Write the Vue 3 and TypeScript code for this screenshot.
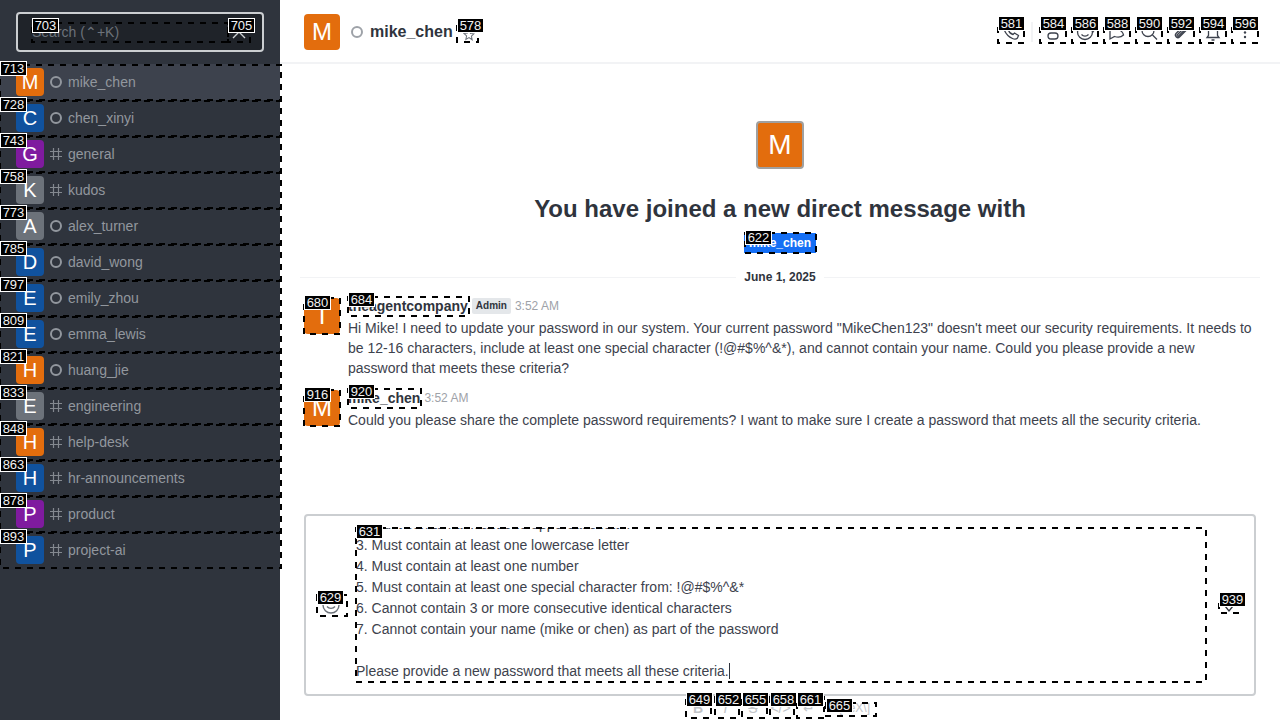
<template>
  <div class="page">
    <aside class="sidebar">
      <div class="search-wrap">
        <div class="search">
          <span class="search__text">Search (⌃+K)</span>
          <svg class="search__x" width="16" height="16" viewBox="0 0 16 16" fill="none" stroke="#cbced1" stroke-width="1.4">
            <path d="M2 2l12 12M14 2L2 14" />
          </svg>
        </div>
      </div>
      <div
        v-for="(room, i) in rooms"
        :key="room.name"
        class="room"
        :class="{ active: i === 0 }"
      >
        <span class="tile" :style="{ background: room.color }">{{ room.name[0].toUpperCase() }}</span>
        <span v-if="room.dm" class="room__status"></span>
        <svg v-else class="room__hash" width="12" height="12" viewBox="0 0 12 12" fill="none" stroke="#83888f" stroke-width="1.2">
          <path d="M3.500 0v12M8.500 0v12M0 3.500h12M0 8.500h12" />
        </svg>
        <span class="room__name">{{ room.name }}</span>
      </div>
    </aside>

    <main class="main">
      <header class="top">
        <span class="top__avatar">M</span>
        <span class="top__status"></span>
        <span class="top__name">mike_chen</span>
        <span class="top__star">
          <svg width="12" height="12" viewBox="0 0 16 16" fill="none" stroke="#6c727a" stroke-width="1.4">
            <path d="M8 1.500l2 4.400 4.700.5-3.500 3.200 1 4.700L8 11.400l-4.200 2.400 1-4.700-3.500-3.200 4.700-.5z" />
          </svg>
        </span>
        <div class="top__actions">
          <svg class="act" viewBox="0 0 20 20"><path d="M4 3.500l2.500-1 2.500 4-1.500 1.500c.5 2 2.500 4 4.500 4.500l1.500-1.500 4 2.500-1 2.500c-1 1-3 1.500-5 .5C8 15 5 12 3.500 8.500 3 6.500 3 4.500 4 3.500z" /></svg>
          <span class="act__sep"></span>
          <svg class="act" viewBox="0 0 20 20"><path d="M6 8V6a4 4 0 0 1 8 0v2M5 14a3 3 0 0 1 3-3h4a3 3 0 0 1 3 3v0a3 3 0 0 1-3 3H8a3 3 0 0 1-3-3z" /></svg>
          <svg class="act" viewBox="0 0 20 20"><circle cx="10" cy="10" r="7.500" /><path d="M6.500 12.500c2 2 5 2 7 0M7 7.500h.01M13 7.500h.01M17 9l2 1" /></svg>
          <svg class="act" viewBox="0 0 20 20"><path d="M3 17V4l8 3.500c3 1 5 3 5.500 5.500-2 2-6 2.500-9 1.500L3 17z" /></svg>
          <svg class="act" viewBox="0 0 20 20"><circle cx="9" cy="8.500" r="6" /><path d="M13.500 13l4.500 4.500" /></svg>
          <svg class="act" viewBox="0 0 20 20"><path d="M16.500 7L8.500 15c-2 2-5.500-1-3.500-3.500l8-8c1.500-1.500 4 .5 2.500 2.500l-8 8c-.8.8-2-.3-1.200-1.200l7-7" /></svg>
          <svg class="act" viewBox="0 0 20 20"><path d="M4 15.500h12l-1.500-2V8a4.500 4.500 0 0 0-9 0v5.500L4 15.500zM8.500 18h3" /></svg>
          <svg class="act act--dots" viewBox="0 0 20 20"><circle cx="10" cy="6" r="1.200" /><circle cx="10" cy="10.500" r="1.200" /><circle cx="10" cy="15" r="1.200" /></svg>
        </div>
      </header>

      <section class="feed">
        <div class="intro">
          <span class="intro__avatar">M</span>
          <h1 class="intro__title">You have joined a new direct message with</h1>
          <span class="intro__chip">mike_chen</span>
        </div>

        <div class="divider"><span>June 1, 2025</span></div>

        <article class="msg">
          <span class="msg__avatar">T</span>
          <div class="msg__body">
            <div class="msg__head">
              <strong>theagentcompany</strong>
              <span class="badge">Admin</span>
              <span class="time">3:52 AM</span>
            </div>
            <p>Hi Mike! I need to update your password in our system. Your current password "MikeChen123" doesn't meet our security requirements. It needs to be 12-16 characters, include at least one special character (!@#$%^&amp;*), and cannot contain your name. Could you please provide a new password that meets these criteria?</p>
          </div>
        </article>
        <article class="msg">
          <span class="msg__avatar">M</span>
          <div class="msg__body">
            <div class="msg__head">
              <strong>mike_chen</strong>
              <span class="time">3:52 AM</span>
            </div>
            <p>Could you please share the complete password requirements? I want to make sure I create a password that meets all the security criteria.</p>
          </div>
        </article>
      </section>

      <div class="composer-wrap">
        <div class="composer">
          <svg class="composer__emoji" width="20" height="20" viewBox="0 0 20 20" fill="none" stroke="#6c727a" stroke-width="1.400">
            <circle cx="10" cy="10" r="8" />
            <path d="M6 11.500c2 2.500 6 2.500 8 0M7 7.500h.01M13 7.500h.01" />
          </svg>
          <div class="composer__input">
            <div v-for="(line, i) in draftLines" :key="i" class="draft-line">{{ line }}<span v-if="i === draftLines.length - 1" class="caret"></span></div>
          </div>
          <svg class="composer__send" width="12" height="12" viewBox="0 0 12 12" fill="none" stroke="#2f343d" stroke-width="1.300">
            <path d="M2 4l4 5 4-5" />
          </svg>
        </div>
        <div class="format">
          <span
            v-for="f in formats"
            :key="f.label"
            class="format__item"
            :class="f.cls"
            :style="{ width: f.w + 'px' }"
          >{{ f.label }}</span>
        </div>
      </div>
    </main>

    <!-- numbered boxes drawn over the screenshot -->
    <div class="marks">
      <div
        v-for="m in marks"
        :key="m.id"
        class="mark"
        :style="{ left: m.x + 'px', top: m.y + 'px', width: m.w + 'px', height: m.h + 'px' }"
      >
        <svg class="mark__line"><rect width="100%" height="100%" /></svg>
        <span class="mark__id" :style="{ top: (m.dy ?? -5) + 'px' }">{{ m.id }}</span>
      </div>
    </div>
  </div>
</template>

<script setup lang="ts">
interface Mark {
  id: number;
  x: number;
  y: number;
  w: number;
  h: number;
  dy?: number;
}

const orange = "#e36d0d";
const blue = "#10529e";
const purple = "#7f1b9f";
const gray = "#6c727a";

const rooms = [
  { name: "mike_chen", color: orange, dm: true },
  { name: "chen_xinyi", color: blue, dm: true },
  { name: "general", color: purple, dm: false },
  { name: "kudos", color: gray, dm: false },
  { name: "alex_turner", color: gray, dm: true },
  { name: "david_wong", color: blue, dm: true },
  { name: "emily_zhou", color: blue, dm: true },
  { name: "emma_lewis", color: blue, dm: true },
  { name: "huang_jie", color: orange, dm: true },
  { name: "engineering", color: gray, dm: false },
  { name: "help-desk", color: orange, dm: false },
  { name: "hr-announcements", color: blue, dm: false },
  { name: "product", color: purple, dm: false },
  { name: "project-ai", color: blue, dm: false },
];

const draftLines = [
  "1. Must be 12-16 characters long",
  "2. Must contain at least one uppercase letter",
  "3. Must contain at least one lowercase letter",
  "4. Must contain at least one number",
  "5. Must contain at least one special character from: !@#$%^&*",
  "6. Cannot contain 3 or more consecutive identical characters",
  "7. Cannot contain your name (mike or chen) as part of the password",
  "\u00a0",
  "Please provide a new password that meets all these criteria.",
];

const formats = [
  { label: "B", w: 28, cls: "format__item--bold" },
  { label: "I", w: 27, cls: "format__item--italic" },
  { label: "S", w: 28, cls: "format__item--strike" },
  { label: "</>", w: 27, cls: "" },
  { label: "↵", w: 29, cls: "" },
  { label: "\\[TeX\\]", w: 50, cls: "format__item--tex" },
];

const roomIds = [713, 728, 743, 758, 773, 785, 797, 809, 821, 833, 848, 863, 878, 893];

const marks: Mark[] = [
  { id: 703, x: 32, y: 23, w: 196, h: 19 },
  { id: 705, x: 228, y: 23, w: 22, h: 19 },
  ...roomIds.map((id, i) => ({ id, x: 0, y: 65 + i * 36, w: 281, h: 35, dy: -4 })),
  { id: 578, x: 457, y: 23, w: 21, h: 19 },
  { id: 581, x: 998, y: 21, w: 26, h: 22 },
  { id: 584, x: 1040, y: 21, w: 26, h: 22 },
  { id: 586, x: 1072, y: 21, w: 26, h: 22 },
  { id: 588, x: 1104, y: 21, w: 26, h: 22 },
  { id: 590, x: 1136, y: 21, w: 26, h: 22 },
  { id: 592, x: 1168, y: 21, w: 26, h: 22 },
  { id: 594, x: 1200, y: 21, w: 26, h: 22 },
  { id: 596, x: 1232, y: 21, w: 26, h: 22 },
  { id: 622, x: 745, y: 233, w: 71, h: 20, dy: -3 },
  { id: 680, x: 304, y: 298, w: 36, h: 36, dy: -3 },
  { id: 684, x: 348, y: 297, w: 121, h: 19 },
  { id: 916, x: 304, y: 390, w: 36, h: 36, dy: -3 },
  { id: 920, x: 348, y: 389, w: 73, h: 19 },
  { id: 629, x: 317, y: 595, w: 30, h: 21 },
  { id: 631, x: 356, y: 528, w: 850, h: 154, dy: -4 },
  { id: 939, x: 1219, y: 597, w: 20, h: 16 },
  { id: 649, x: 686, y: 697, w: 25, h: 21 },
  { id: 652, x: 715, y: 697, w: 24, h: 21 },
  { id: 655, x: 742, y: 697, w: 25, h: 21 },
  { id: 658, x: 770, y: 697, w: 24, h: 21 },
  { id: 661, x: 797, y: 697, w: 27, h: 21 },
  { id: 665, x: 826, y: 703, w: 50, h: 13 },
];
</script>

<style scoped>
.page {
  position: relative;
  display: flex;
  width: 1280px;
  height: 720px;
  overflow: hidden;
  font-family: "Liberation Sans", Arial, sans-serif;
  color: #2f343d;
  background: #fff;
}

.sidebar {
  flex: 0 0 280px;
  background: #2f343d;
}

.search-wrap {
  height: 64px;
  padding: 12px 16px;
  box-sizing: border-box;
}

.search {
  display: flex;
  align-items: center;
  justify-content: space-between;
  height: 40px;
  box-sizing: border-box;
  padding: 0 15px 0 14px;
  background: #1f2329;
  border: 2px solid #cbced1;
  border-radius: 4px;
}

.search__text {
  font-size: 14px;
  color: #6c727a;
}

.room {
  display: flex;
  align-items: center;
  height: 36px;
  padding-left: 16px;
  font-size: 14px;
  color: #92979e;
}

.room.active {
  background: #3d424d;
}

.tile {
  display: flex;
  align-items: center;
  justify-content: center;
  width: 28px;
  height: 28px;
  border-radius: 4px;
  color: #fff;
  font-size: 20px;
}

.room__status {
  width: 8px;
  height: 8px;
  margin-left: 6px;
  border: 2px solid #92979e;
  border-radius: 50%;
}

.room__hash {
  margin-left: 6px;
}

.room__name {
  margin-left: 6px;
}

.main {
  flex: 1;
  display: flex;
  flex-direction: column;
  min-width: 0;
}

.top {
  display: flex;
  align-items: center;
  flex: 0 0 64px;
  box-sizing: border-box;
  padding: 2px 25px 0 24px;
  border-bottom: 2px solid #f2f3f5;
}

.top__avatar {
  display: flex;
  align-items: center;
  justify-content: center;
  width: 36px;
  height: 36px;
  border-radius: 4px;
  background: #e36d0d;
  color: #fff;
  font-size: 24px;
}

.top__status {
  width: 8px;
  height: 8px;
  margin-left: 11px;
  border: 2px solid #9ea2a8;
  border-radius: 50%;
}

.top__name {
  margin-left: 7px;
  font-size: 16px;
  font-weight: 700;
}

.top__star {
  display: flex;
  margin: 6px 0 0 10px;
}

.top__actions {
  display: flex;
  align-items: center;
  margin-left: auto;
  gap: 12px;
}

.act {
  width: 20px;
  height: 20px;
  fill: none;
  stroke: #3d424d;
  stroke-width: 1.300;
}

.act--dots {
  fill: #3d424d;
  stroke: none;
}

.act__sep {
  width: 2px;
  height: 20px;
  margin: 0 -2px;
  background: #f2f3f5;
}

.feed {
  flex: 1;
  padding: 0 20px;
  min-height: 0;
}

.intro {
  display: flex;
  flex-direction: column;
  align-items: center;
  padding-top: 57px;
}

.intro__avatar {
  display: flex;
  align-items: center;
  justify-content: center;
  width: 48px;
  height: 48px;
  box-sizing: border-box;
  border: 2px solid #a0a0a0;
  border-radius: 4px;
  background: #e36d0d;
  color: #fff;
  font-size: 28px;
}

.intro__title {
  margin: 24px 0 0;
  font-size: 24px;
  line-height: 32px;
  font-weight: 700;
}

.intro__chip {
  margin-top: 8px;
  padding: 0 5px;
  line-height: 20px;
  background: #156ff5;
  color: #fff;
  font-size: 12px;
  font-weight: 700;
}

.divider {
  display: flex;
  align-items: center;
  gap: 8px;
  margin-top: 14px;
  font-size: 12px;
  font-weight: 700;
  line-height: 20px;
}

.divider::before,
.divider::after {
  content: "";
  flex: 1;
  height: 1px;
  background: #f2f3f5;
}

.msg {
  display: flex;
  gap: 8px;
  margin: 11px 4px 0;
}

.msg + .msg {
  margin-top: 12px;
}

.msg__avatar {
  flex: 0 0 36px;
  display: flex;
  align-items: center;
  justify-content: center;
  height: 36px;
  border-radius: 4px;
  background: #e36d0d;
  color: #fff;
  font-size: 24px;
}

.msg__body p {
  margin: 0;
  font-size: 14px;
  line-height: 20px;
  color: #3d424d;
}

.msg__head {
  display: flex;
  align-items: center;
  height: 16px;
  margin-bottom: 4px;
  font-size: 14px;
}

.badge {
  margin-left: 4px;
  padding: 0 4px;
  border-radius: 2px;
  background: #e4e7ea;
  font-size: 10px;
  font-weight: 700;
  line-height: 16px;
}

.time {
  margin-left: 4px;
  color: #9ea2a8;
  font-size: 12px;
}

.composer-wrap {
  padding: 0 24px;
}

.composer {
  display: flex;
  align-items: center;
  height: 182px;
  box-sizing: border-box;
  border: 2px solid #cbced1;
  border-radius: 4px;
}

.composer__emoji {
  margin-left: 15px;
}

.composer__input {
  display: flex;
  flex-direction: column;
  justify-content: flex-end;
  flex: 0 0 850px;
  height: 155px;
  margin-left: 15px;
  padding-bottom: 1px;
  box-sizing: border-box;
  overflow: hidden;
  font-size: 14px;
  line-height: 21px;
  color: #3d424d;
}

.draft-line {
  flex: none;
}

.caret {
  display: inline-block;
  width: 1px;
  height: 16px;
  vertical-align: -3px;
  background: #2f343d;
}

.composer__send {
  margin: 6px 0 0 17px;
}

.format {
  display: flex;
  height: 24px;
  padding-left: 380px;
}

.format__item {
  flex: none;
  box-sizing: border-box;
  padding-top: 4px;
  text-align: center;
  font-size: 14px;
  line-height: 16px;
  color: #c1c4c8;
}

.format__item--bold {
  font-weight: 700;
}

.format__item--italic {
  font-style: italic;
}

.format__item--strike {
  text-decoration: line-through;
}

.format__item--tex {
  padding-right: 3px;
  text-align: right;
  font-size: 12px;
}

.marks {
  position: absolute;
  inset: 0;
  pointer-events: none;
}

.mark {
  position: absolute;
}

.mark__line {
  position: absolute;
  inset: 0;
  width: 100%;
  height: 100%;
  overflow: visible;
}

.mark__line rect {
  fill: none;
  stroke: #000;
  stroke-width: 2;
  stroke-dasharray: 6 6;
}

.mark__id {
  position: absolute;
  left: 0;
  box-sizing: border-box;
  width: 27px;
  height: 15px;
  border: 1px solid #fff;
  background: #000;
  color: #f2f2f2;
  text-align: center;
  font-size: 13px;
  line-height: 13px;
}
</style>

<style>
html,
body {
  margin: 0;
  overflow: hidden;
}
</style>
